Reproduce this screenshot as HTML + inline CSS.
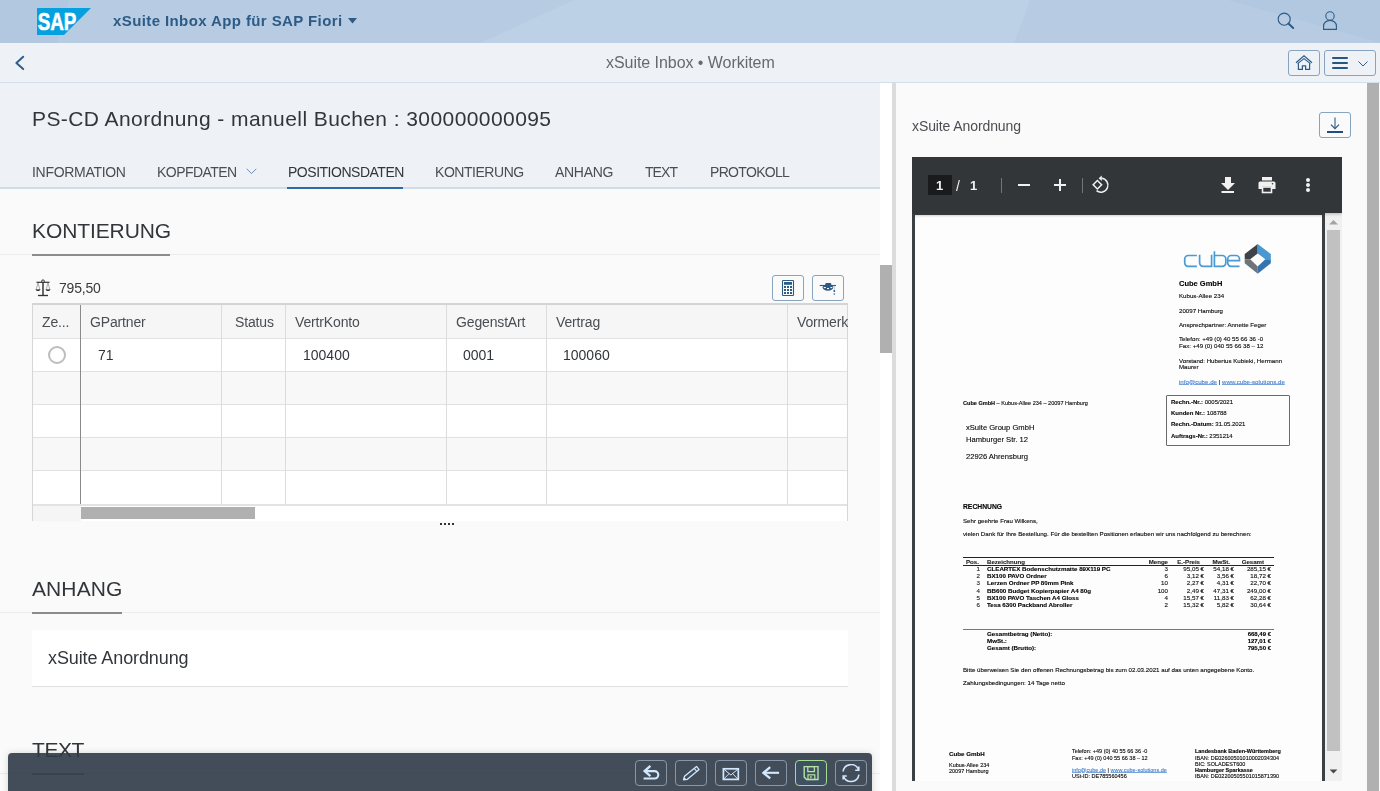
<!DOCTYPE html>
<html><head><meta charset="utf-8">
<style>
*{box-sizing:border-box;margin:0;padding:0}
html,body{width:1380px;height:791px;overflow:hidden;background:#fafafa;font-family:"Liberation Sans",sans-serif;color:#32363a}
.a{position:absolute}
.t{position:absolute;white-space:nowrap;line-height:1;will-change:transform}
#shell{left:0;top:0;width:1380px;height:43px;background:#b7cce3}
#nav{left:0;top:43px;width:1380px;height:40px;background:#eef2f7;border-bottom:1px solid #d3dfec}
#hdr{left:0;top:83px;width:880px;height:106px;background:#eef2f7}
#tabline{left:0;top:187px;width:880px;height:2px;background:#cfdcea}
.btn{position:absolute;border:1px solid #86a3bf;border-radius:3px}
.tab{font-size:14px;color:#4a4e52;letter-spacing:-0.3px;margin-top:-2.3px}
.hd{font-size:21px;color:#32363a;letter-spacing:0.1px}
.th{font-size:14px;color:#4a4e52;letter-spacing:-0.15px}
.td{font-size:14px;color:#32363a}
.vl{position:absolute;width:1px;background:#dcdcdc}
.hl{position:absolute;height:1px;background:#e1e1e1}
.p{position:absolute;white-space:nowrap;line-height:1;color:#000;font-size:5.6px;-webkit-text-stroke:0.12px currentColor;will-change:transform}
.pb{font-weight:700}
.fb{position:absolute;top:7px;width:32px;height:26px;border:1px solid #8797a8;border-radius:4px}
</style></head><body>

<!-- SHELL BAR -->
<div id="shell" class="a">
  <svg class="a" style="left:0;top:0" width="1380" height="43" viewBox="0 0 1380 43">
    <polygon points="0,0 69,0 57,43 0,43" fill="#b2c8e0"/>
    <polygon points="574,0 1030,0 1014,43 481,43" fill="#bdd1e6"/>
    <polygon points="1228,0 1380,0 1380,43" fill="#b2c8e1"/>
  </svg>
  <svg class="a" style="left:37px;top:8px" width="54" height="27" viewBox="0 0 54 27">
    <defs><linearGradient id="sg" x1="0" y1="0" x2="0" y2="1"><stop offset="0" stop-color="#00b8f1"/><stop offset="1" stop-color="#0a8fd6"/></linearGradient></defs>
    <polygon points="0,0 54,0 27,27 0,27" fill="#05a0e0"/>
    <text x="0.8" y="22" font-family="Liberation Sans" font-weight="700" font-size="23" fill="#fff" textLength="38.6" lengthAdjust="spacingAndGlyphs" stroke="#fff" stroke-width="0.6">SAP</text>
  </svg>
  <div class="t" style="left:113px;top:13px;font-size:15px;font-weight:700;color:#2d5b86;letter-spacing:0.4px">xSuite Inbox App für SAP Fiori</div>
  <svg class="a" style="left:348px;top:17px" width="10" height="7"><polygon points="0,1 9,1 4.5,6.5" fill="#2d5b86"/></svg>
  <svg class="a" style="left:1276px;top:11px" width="20" height="20" viewBox="0 0 20 20">
    <circle cx="8.2" cy="8.2" r="6" fill="none" stroke="#2d5b86" stroke-width="1.15"/>
    <line x1="12.4" y1="12.6" x2="17.2" y2="17" stroke="#2d5b86" stroke-width="2" stroke-linecap="round"/>
  </svg>
  <svg class="a" style="left:1320px;top:10px" width="20" height="22" viewBox="0 0 20 22">
    <circle cx="10" cy="6" r="4.2" fill="none" stroke="#2d5b86" stroke-width="1.1"/>
    <path d="M3.6,19.4 V16 a6.4,5.6 0 0 1 12.8,0 V19.4 Z" fill="none" stroke="#2d5b86" stroke-width="1.15"/>
  </svg>
</div>

<!-- NAV BAR -->
<div id="nav" class="a">
  <svg class="a" style="left:12px;top:10px" width="16" height="20" viewBox="0 0 16 20"><polyline points="11.2,3.7 4.4,10 11.2,16.1" fill="none" stroke="#2e5f8a" stroke-width="2" stroke-linecap="round" stroke-linejoin="round"/></svg>
  <div class="t" style="left:606px;top:12px;font-size:16px;color:#666a6e;letter-spacing:-0.05px">xSuite Inbox • Workitem</div>
  <div class="btn" style="left:1288px;top:7px;width:32px;height:26px">
    <svg class="a" style="left:6px;top:3px" width="20" height="18" viewBox="0 0 20 18">
      <polyline points="1,8.8 9,1.9 17,8.8" fill="none" stroke="#2d5b86" stroke-width="1.2"/>
      <polyline points="2.6,9.6 9,4.6 15.4,9.6" fill="none" stroke="#2d5b86" stroke-width="1.1"/>
      <path d="M3.4,9.2 V15.4 H7.4 V11.8 H10.6 V15.4 H14.6 V9.2" fill="none" stroke="#2d5b86" stroke-width="1.2"/>
    </svg>
  </div>
  <div class="btn" style="left:1324px;top:7px;width:52px;height:26px">
    <div class="a" style="left:7px;top:6.2px;width:16px;height:2px;background:#285682;border-radius:1px"></div>
    <div class="a" style="left:7px;top:11.2px;width:16px;height:2px;background:#285682;border-radius:1px"></div>
    <div class="a" style="left:7px;top:16.2px;width:16px;height:2px;background:#285682;border-radius:1px"></div>
    <svg class="a" style="left:33px;top:10px" width="10" height="6" viewBox="0 0 10 6"><polyline points="0.5,0.5 5,5 9.5,0.5" fill="none" stroke="#2d5b86" stroke-width="1"/></svg>
  </div>
</div>

<!-- LEFT HEADER -->
<div id="hdr" class="a">
  <div class="t" style="left:32px;top:25px;font-size:21px;color:#32363a;letter-spacing:0.42px">PS-CD Anordnung - manuell Buchen : 300000000095</div>
</div>
<div id="tabline" class="a"></div>
<div class="t tab" style="left:32px;top:167px">INFORMATION</div>
<div class="t tab" style="left:156.5px;top:167px;letter-spacing:-0.55px">KOPFDATEN</div>
<svg class="a" style="left:246px;top:168px" width="11" height="7" viewBox="0 0 11 7"><polyline points="0.7,0.8 5.5,5.6 10.3,0.8" fill="none" stroke="#6a8db0" stroke-width="1"/></svg>
<div class="t tab" style="left:287.5px;top:167px;color:#32363a;letter-spacing:-0.48px">POSITIONSDATEN</div>
<div class="a" style="left:287px;top:187px;width:116px;height:2px;background:#2b6ca6"></div>
<div class="t tab" style="left:434.6px;top:167px;letter-spacing:-0.46px">KONTIERUNG</div>
<div class="t tab" style="left:555px;top:167px">ANHANG</div>
<div class="t tab" style="left:644.5px;top:167px;letter-spacing:-0.95px">TEXT</div>
<div class="t tab" style="left:709.5px;top:167px;letter-spacing:-0.68px">PROTOKOLL</div>

<!-- KONTIERUNG SECTION -->
<div class="t hd" style="left:31.8px;top:219.8px;letter-spacing:-0.1px">KONTIERUNG</div>
<div class="a" style="left:0;top:254px;width:880px;height:1px;background:#ececec"></div>
<div class="a" style="left:32px;top:254px;width:138px;height:2px;background:#8c8c8c"></div>

<svg class="a" style="left:35px;top:279px" width="16" height="18" viewBox="0 0 16 18">
  <circle cx="8" cy="2.3" r="1.4" fill="none" stroke="#333" stroke-width="1"/>
  <line x1="1.5" y1="3.3" x2="14.5" y2="3.3" stroke="#333" stroke-width="1.2"/>
  <line x1="8" y1="3.5" x2="8" y2="16" stroke="#444" stroke-width="1.6"/>
  <line x1="3" y1="16.5" x2="13" y2="16.5" stroke="#333" stroke-width="1.3"/>
  <path d="M1,11 L3,4 L5,11 Z M11,11 L13,4 L15,11 Z" fill="none" stroke="#777" stroke-width="0.6"/>
  <path d="M0.5,10.5 H5.5 Q3,13.5 0.5,10.5 Z M10.5,10.5 H15.5 Q13,13.5 10.5,10.5 Z" fill="#222"/>
</svg>
<div class="t td" style="left:58.5px;top:281px;color:#3a3a3a;letter-spacing:-0.2px">795,50</div>

<div class="btn" style="left:772px;top:275px;width:32px;height:26px">
  <svg class="a" style="left:8px;top:3px" width="14" height="18" viewBox="0 0 14 18">
    <rect x="1.5" y="1.5" width="11" height="15" rx="0.6" fill="none" stroke="#2d5b86" stroke-width="1.1"/>
    <rect x="3" y="3" width="8" height="2.8" fill="#2d5b86"/>
    <g fill="#2d5b86"><rect x="3" y="7" width="2" height="2"/><rect x="6" y="7" width="2" height="2"/><rect x="9" y="7" width="2" height="2"/>
    <rect x="3" y="10" width="2" height="2"/><rect x="6" y="10" width="2" height="2"/><rect x="9" y="10" width="2" height="2"/>
    <rect x="3" y="13" width="2" height="2"/><rect x="6" y="13" width="2" height="2"/><rect x="9" y="13" width="2" height="2"/></g>
  </svg>
</div>
<div class="btn" style="left:812px;top:275px;width:32px;height:26px">
  <svg class="a" style="left:6px;top:5px" width="20" height="16" viewBox="0 0 20 16">
    <line x1="0.7" y1="4.5" x2="17" y2="4.5" stroke="#2d5b86" stroke-width="1.1"/>
    <rect x="6.3" y="1.9" width="6" height="3" rx="1" fill="#2d5b86"/>
    <ellipse cx="8.9" cy="6.5" rx="5.3" ry="3.3" fill="#2d5b86"/>
    <rect x="4.8" y="6" width="2" height="1.1" fill="#fafafa"/><rect x="8" y="7" width="2" height="1.1" fill="#fafafa"/><rect x="11.4" y="6" width="1.9" height="1.1" fill="#fafafa"/>
    <line x1="15.3" y1="4.8" x2="15.3" y2="8.8" stroke="#9fb4c8" stroke-width="0.7"/>
    <circle cx="15.3" cy="10" r="0.95" fill="#2d5b86"/><circle cx="15.3" cy="13" r="0.8" fill="#2d5b86"/>
  </svg>
</div>

<!-- TABLE -->
<div id="tbl" class="a" style="left:32px;top:303px;width:816px;height:218px;background:#fff;overflow:hidden">
  <div class="a" style="left:0;top:0;width:816px;height:35px;background:#f6f6f6"></div>
  <div class="a" style="left:0;top:0;width:816px;height:2px;background:#d4d4d4"></div>
  <div class="a" style="left:0;top:68px;width:816px;height:33px;background:#f8f8f8"></div>
  <div class="a" style="left:0;top:134px;width:816px;height:34px;background:#f8f8f8"></div>
  <div class="hl" style="left:0;top:35px;width:816px"></div>
  <div class="hl" style="left:0;top:68px;width:816px"></div>
  <div class="hl" style="left:0;top:101px;width:816px"></div>
  <div class="hl" style="left:0;top:134px;width:816px"></div>
  <div class="hl" style="left:0;top:167px;width:816px"></div>
  <div class="hl" style="left:0;top:201px;width:816px;height:2px;background:#e3e3e3"></div>
  <div class="vl" style="left:0;top:0;height:218px;background:#d6d6d6"></div>
  <div class="a" style="left:48px;top:2px;width:1px;height:199px;background:#8a8a8a"></div>
  <div class="vl" style="left:189px;top:2px;height:199px"></div>
  <div class="vl" style="left:253px;top:2px;height:199px"></div>
  <div class="vl" style="left:414px;top:2px;height:199px"></div>
  <div class="vl" style="left:514px;top:2px;height:199px"></div>
  <div class="vl" style="left:755px;top:2px;height:199px"></div>
  <div class="vl" style="left:815px;top:0;height:218px;background:#d6d6d6"></div>
  <div class="a" style="left:1px;top:203px;width:48px;height:15px;background:#f5f5f5"></div>
  <div class="a" style="left:49px;top:204px;width:174px;height:12px;background:#b0b0b0"></div>

  <div class="t th" style="left:10px;top:12.4px">Ze...</div>
  <div class="t th" style="left:58px;top:12.4px">GPartner</div>
  <div class="t th" style="left:202.5px;top:12.4px">Status</div>
  <div class="t th" style="left:263.3px;top:12.4px">VertrKonto</div>
  <div class="t th" style="left:424.3px;top:12.4px">GegenstArt</div>
  <div class="t th" style="left:524.3px;top:12.4px">Vertrag</div>
  <div class="t th" style="left:765.2px;top:12.4px">Vormerk</div>

  <div class="a" style="left:16px;top:43px;width:18px;height:18px;border:2px solid #bdbdbd;border-radius:50%;background:#fff"></div>
  <div class="t td" style="left:65.8px;top:44.8px">71</div>
  <div class="t td" style="left:270.5px;top:44.8px">100400</div>
  <div class="t td" style="left:431px;top:44.8px">0001</div>
  <div class="t td" style="left:531.3px;top:44.8px">100060</div>
</div>
<div class="a" style="left:440px;top:523px;width:2px;height:2px;background:#333"></div>
<div class="a" style="left:444px;top:523px;width:2px;height:2px;background:#333"></div>
<div class="a" style="left:448px;top:523px;width:2px;height:2px;background:#333"></div>
<div class="a" style="left:452px;top:523px;width:2px;height:2px;background:#333"></div>

<!-- ANHANG -->
<div class="t hd" style="left:31.8px;top:577.9px">ANHANG</div>
<div class="a" style="left:0;top:612px;width:880px;height:1px;background:#ececec"></div>
<div class="a" style="left:32px;top:612px;width:90px;height:2px;background:#8c8c8c"></div>
<div class="a" style="left:32px;top:630px;width:816px;height:57px;background:#fff;border-bottom:1px solid #e1e1e1"></div>
<div class="t" style="left:48px;top:649px;font-size:18px;color:#32363a;letter-spacing:-0.1px">xSuite Anordnung</div>

<!-- TEXT -->
<div class="t hd" style="left:31.8px;top:738.9px;letter-spacing:-0.45px">TEXT</div>
<div class="a" style="left:0;top:773px;width:880px;height:1px;background:#ececec"></div>
<div class="a" style="left:32px;top:773px;width:52px;height:2px;background:#8c8c8c"></div>

<!-- LEFT SCROLLBAR + DIVIDER -->
<div class="a" style="left:880px;top:83px;width:12px;height:708px;background:#fff"></div>
<div class="a" style="left:880px;top:265px;width:12px;height:88px;background:#b0b0b0"></div>
<div class="a" style="left:892px;top:83px;width:4px;height:708px;background:#dcdcdc"></div>

<!-- FOOTER -->
<div id="footer" class="a" style="left:8px;top:753px;width:864px;height:45px;background:rgba(46,58,71,0.9);border-radius:4px;box-shadow:0 0 6px rgba(0,0,0,0.15)">
  <div class="fb" style="left:627px">
    <svg class="a" style="left:6px;top:3px" width="20" height="20" viewBox="0 0 20 20">
      <path d="M2.6,7.1 H12.6 A3.7,3.7 0 0 1 12.6,14.5 H1.6" fill="none" stroke="#d1e8ff" stroke-width="2.1"/>
      <polyline points="8.4,1.9 2.6,7.1 8.4,12.2" fill="none" stroke="#d1e8ff" stroke-width="2.3"/>
    </svg>
  </div>
  <div class="fb" style="left:667px">
    <svg class="a" style="left:6px;top:3px" width="20" height="20" viewBox="0 0 20 20">
      <path d="M1.5,15.8 L2.54,12.34 L14.52,2.45 L17.08,5.55 L5.1,15.44 Z" fill="none" stroke="#d1e8ff" stroke-width="1.3" stroke-linejoin="round"/>
      <line x1="12.2" y1="4.36" x2="14.76" y2="7.46" stroke="#d1e8ff" stroke-width="1.1"/>
      <polygon points="1.5,15.8 2.2,13.3 4,14.9" fill="#d1e8ff"/>
    </svg>
  </div>
  <div class="fb" style="left:707px">
    <svg class="a" style="left:6px;top:3px" width="20" height="20" viewBox="0 0 20 20">
      <rect x="1.4" y="4.8" width="14.9" height="10.6" fill="none" stroke="#d1e8ff" stroke-width="1.7"/>
      <polyline points="1.6,5 8.85,11 16.1,5" fill="none" stroke="#d1e8ff" stroke-width="1"/>
      <line x1="1.6" y1="15.2" x2="7" y2="9.8" stroke="#d1e8ff" stroke-width="0.9"/>
      <line x1="16.1" y1="15.2" x2="10.7" y2="9.8" stroke="#d1e8ff" stroke-width="0.9"/>
    </svg>
  </div>
  <div class="fb" style="left:747px">
    <svg class="a" style="left:6px;top:3px" width="20" height="20" viewBox="0 0 20 20">
      <line x1="1.4" y1="8.8" x2="17.1" y2="8.8" stroke="#d1e8ff" stroke-width="2.1"/>
      <polyline points="8.2,3.2 1.4,8.8 8.2,14.4" fill="none" stroke="#d1e8ff" stroke-width="2.3"/>
    </svg>
  </div>
  <div class="fb" style="left:787px;border-color:#a4dc90;background:#3e5062">
    <svg class="a" style="left:6px;top:3px" width="20" height="20" viewBox="0 0 20 20">
      <path d="M2.2,2.6 H16 V15.5 H4.6 L2.2,13.1 Z" fill="none" stroke="#b3e3a0" stroke-width="1.4"/>
      <rect x="5.8" y="2.6" width="6.6" height="5" fill="none" stroke="#b3e3a0" stroke-width="1.3"/>
      <rect x="6" y="10.8" width="6.8" height="4.7" fill="none" stroke="#b3e3a0" stroke-width="1.2"/>
      <rect x="8.2" y="12" width="1.3" height="2.2" fill="#b3e3a0"/>
    </svg>
  </div>
  <div class="fb" style="left:827px">
    <svg class="a" style="left:6px;top:3px" width="20" height="20" viewBox="0 0 20 20">
      <path d="M1.1,7.5 A8,8 0 0 1 16.4,5.5" fill="none" stroke="#d1e8ff" stroke-width="1.5"/>
      <path d="M16.9,10.6 A8,8 0 0 1 1.6,12.6" fill="none" stroke="#d1e8ff" stroke-width="1.5"/>
      <polyline points="16.8,2.6 16.8,6.2 13.2,6.2" fill="none" stroke="#d1e8ff" stroke-width="1.6"/>
      <polyline points="1.2,15.6 1.2,12 4.8,12" fill="none" stroke="#d1e8ff" stroke-width="1.6"/>
    </svg>
  </div>
</div>

<!-- RIGHT PANEL -->
<div class="t" style="left:912px;top:119px;font-size:14px;color:#4a4e52;letter-spacing:-0.1px">xSuite Anordnung</div>
<div class="btn" style="left:1319px;top:112px;width:32px;height:26px">
  <svg class="a" style="left:5px;top:2px" width="20" height="20" viewBox="0 0 20 20">
    <line x1="10" y1="2.5" x2="10" y2="13.5" stroke="#2d5b86" stroke-width="1.1"/>
    <polyline points="6,9.6 10,13.6 14,9.6" fill="none" stroke="#2d5b86" stroke-width="1.3"/>
    <line x1="2" y1="17" x2="18" y2="17" stroke="#1f4e7d" stroke-width="2"/>
  </svg>
</div>

<div id="pdf" class="a" style="left:912px;top:157px;width:430px;height:624px;background:#3b4045;overflow:hidden">
  <!-- page -->
  <!--PDFSTART--><div id="pc" class="a" style="left:3px;top:58px;width:407px;height:566px;background:#fdfdfd;overflow:hidden;box-shadow:inset 0 3px 3px -2px rgba(0,0,0,0.12)">
<svg class="a" style="left:265px;top:25px" width="95" height="38" viewBox="0 0 95 38">
<g fill="none" stroke="#4a9ad4" stroke-width="1.7">
<path d="M16.9,15.5 H8.2 A3.5,3.5 0 0 0 4.7,19 V22.8 A3.5,3.5 0 0 0 8.2,26.3 H16.9"/>
<path d="M19.6,14.8 V22.8 A3.5,3.5 0 0 0 23.1,26.3 H31.6 V14.8"/>
<path d="M34.4,11.2 V26.3 H42.3 A3.5,3.5 0 0 0 45.8,22.8 V19 A3.5,3.5 0 0 0 42.3,15.5 H34.4"/>
<path d="M59.5,26.3 H51.2 A3.5,3.5 0 0 1 47.7,22.8 V19 A3.5,3.5 0 0 1 51.2,15.5 H56 A3.5,3.5 0 0 1 59.5,19 V20.6 H47.7"/>
</g>
<polygon points="77.7,4.1 77.7,13.4 70.2,19.3 64.7,19.3 64.7,14 " fill="#3d4449"/>
<polygon points="64.7,19.3 70.2,19.3 77.7,26.5 77.7,33.7 64.7,23.2" fill="#6d757b"/>
<polygon points="77.7,4.1 90.8,14 90.8,19.3 85.3,19.3 77.7,13.4" fill="#4a98d2"/>
<polygon points="90.8,19.3 90.8,23.2 77.7,33.7 77.7,26.5 85.3,19.3" fill="#3474ae"/>
</svg>
<div class="p" style="left:263.70px;top:64.65px;font-size:7.5px;font-weight:700">Cube GmbH</div>
<div class="p" style="left:263.60px;top:77.59px;font-size:6.15px;color:#0a0a0a">Kubus-Allee 234</div>
<div class="p" style="left:263.60px;top:93.09px;font-size:6.15px;color:#0a0a0a">20097 Hamburg</div>
<div class="p" style="left:263.60px;top:106.79px;font-size:6.15px;color:#0a0a0a">Ansprechpartner: Annette Feger</div>
<div class="p" style="left:263.60px;top:121.49px;font-size:6.15px;color:#0a0a0a">Telefon: +49 (0) 40 55 66 36 -0</div>
<div class="p" style="left:263.60px;top:128.29px;font-size:6.15px;color:#0a0a0a">Fax: +49 (0) 040 55 66 38 – 12</div>
<div class="p" style="left:263.60px;top:142.69px;font-size:6.15px;color:#0a0a0a">Vorstand: Hubertus Kubieki, Hermann</div>
<div class="p" style="left:263.60px;top:149.49px;font-size:6.15px;color:#0a0a0a">Maurer</div>
<div class="p" style="left:263.60px;top:163.59px;font-size:6.15px;color:#0a0a0a"><span style="color:#4a84cf;text-decoration:underline;text-decoration-color:rgba(74,132,207,0.75);text-decoration-thickness:0.5px;text-underline-offset:-0.3px">info@cube.de</span> | <span style="color:#4a84cf;text-decoration:underline;text-decoration-color:rgba(74,132,207,0.75);text-decoration-thickness:0.5px;text-underline-offset:-0.3px">www.cube-solutions.de</span></div>
<div class="p" style="left:48.00px;top:186.20px;font-size:5.55px;color:#0a0a0a"><b>Cube GmbH</b> – Kubus-Allee 234 – 20097 Hamburg</div>
<div class="a" style="left:250.70px;top:180.40px;width:124px;height:51px;border:1px solid #6a6a6a;border-radius:1px"></div>
<div class="p" style="left:256.00px;top:183.92px;font-size:6.0px;color:#0a0a0a"><b>Rechn.-Nr.:</b> 0005/2021</div>
<div class="p" style="left:256.00px;top:194.92px;font-size:6.0px;color:#0a0a0a"><b>Kunden Nr.:</b> 108788</div>
<div class="p" style="left:256.00px;top:206.12px;font-size:6.0px;color:#0a0a0a"><b>Rechn.-Datum:</b> 31.05.2021</div>
<div class="p" style="left:256.00px;top:217.62px;font-size:6.0px;color:#0a0a0a"><b>Auftrags-Nr.:</b> 2351214</div>
<div class="p" style="left:50.60px;top:208.57px;font-size:7.6px;color:#0a0a0a">xSuite Group GmbH</div>
<div class="p" style="left:50.60px;top:221.47px;font-size:7.6px;color:#0a0a0a">Hamburger Str. 12</div>
<div class="p" style="left:50.60px;top:238.47px;font-size:7.6px;color:#0a0a0a">22926 Ahrensburg</div>
<div class="p" style="left:48.00px;top:288.69px;font-size:6.75px;font-weight:700">RECHNUNG</div>
<div class="p" style="left:48.00px;top:302.54px;font-size:6.15px;color:#0a0a0a">Sehr geehrte Frau Wilkens,</div>
<div class="p" style="left:48.00px;top:315.57px;font-size:6.18px;color:#0a0a0a">vielen Dank für Ihre Bestellung. Für die bestellten Positionen erlauben wir uns nachfolgend zu berechnen:</div>
<div class="a" style="left:48.00px;top:341.50px;width:311px;height:1.3px;background:#222"></div>
<div class="a" style="left:48.00px;top:350.00px;width:311px;height:1.1px;background:#222"></div>
<div class="p" style="left:51.00px;top:343.64px;font-size:6.1px;font-weight:700;color:#222">Pos.</div>
<div class="p" style="left:72.00px;top:343.64px;font-size:6.1px;font-weight:700;color:#222">Bezeichnung</div>
<div class="p" style="left:253.00px;top:343.64px;font-size:6.1px;font-weight:700;color:#222;transform:translateX(-100%)">Menge</div>
<div class="p" style="left:284.50px;top:343.64px;font-size:6.1px;font-weight:700;color:#222;transform:translateX(-100%)">E.-Preis</div>
<div class="p" style="left:314.50px;top:343.64px;font-size:6.1px;font-weight:700;color:#222;transform:translateX(-100%)">MwSt.</div>
<div class="p" style="left:349.00px;top:343.64px;font-size:6.1px;font-weight:700;color:#222;transform:translateX(-100%)">Gesamt</div>
<div class="p" style="left:64.70px;top:351.05px;font-size:6.2px;color:#222;transform:translateX(-100%)">1</div>
<div class="p" style="left:72.00px;top:351.05px;font-size:6.2px;font-weight:700">CLEARTEX Bodenschutzmatte 89X119 PC</div>
<div class="p" style="left:253.00px;top:351.05px;font-size:6.2px;color:#111;transform:translateX(-100%)">3</div>
<div class="p" style="left:289.00px;top:351.05px;font-size:6.2px;color:#111;transform:translateX(-100%)">95,05 €</div>
<div class="p" style="left:318.50px;top:351.05px;font-size:6.2px;color:#111;transform:translateX(-100%)">54,18 €</div>
<div class="p" style="left:355.80px;top:351.05px;font-size:6.2px;color:#111;transform:translateX(-100%)">285,15 €</div>
<div class="p" style="left:64.70px;top:358.23px;font-size:6.2px;color:#222;transform:translateX(-100%)">2</div>
<div class="p" style="left:72.00px;top:358.23px;font-size:6.2px;font-weight:700">BX100 PAVO Ordner</div>
<div class="p" style="left:253.00px;top:358.23px;font-size:6.2px;color:#111;transform:translateX(-100%)">6</div>
<div class="p" style="left:289.00px;top:358.23px;font-size:6.2px;color:#111;transform:translateX(-100%)">3,12 €</div>
<div class="p" style="left:318.50px;top:358.23px;font-size:6.2px;color:#111;transform:translateX(-100%)">3,56 €</div>
<div class="p" style="left:355.80px;top:358.23px;font-size:6.2px;color:#111;transform:translateX(-100%)">18,72 €</div>
<div class="p" style="left:64.70px;top:365.41px;font-size:6.2px;color:#222;transform:translateX(-100%)">3</div>
<div class="p" style="left:72.00px;top:365.41px;font-size:6.2px;font-weight:700">Lerzen Ordner PP 80mm Pink</div>
<div class="p" style="left:253.00px;top:365.41px;font-size:6.2px;color:#111;transform:translateX(-100%)">10</div>
<div class="p" style="left:289.00px;top:365.41px;font-size:6.2px;color:#111;transform:translateX(-100%)">2,27 €</div>
<div class="p" style="left:318.50px;top:365.41px;font-size:6.2px;color:#111;transform:translateX(-100%)">4,31 €</div>
<div class="p" style="left:355.80px;top:365.41px;font-size:6.2px;color:#111;transform:translateX(-100%)">22,70 €</div>
<div class="p" style="left:64.70px;top:372.59px;font-size:6.2px;color:#222;transform:translateX(-100%)">4</div>
<div class="p" style="left:72.00px;top:372.59px;font-size:6.2px;font-weight:700">BB600 Budget Kopierpapier A4 80g</div>
<div class="p" style="left:253.00px;top:372.59px;font-size:6.2px;color:#111;transform:translateX(-100%)">100</div>
<div class="p" style="left:289.00px;top:372.59px;font-size:6.2px;color:#111;transform:translateX(-100%)">2,49 €</div>
<div class="p" style="left:318.50px;top:372.59px;font-size:6.2px;color:#111;transform:translateX(-100%)">47,31 €</div>
<div class="p" style="left:355.80px;top:372.59px;font-size:6.2px;color:#111;transform:translateX(-100%)">249,00 €</div>
<div class="p" style="left:64.70px;top:379.77px;font-size:6.2px;color:#222;transform:translateX(-100%)">5</div>
<div class="p" style="left:72.00px;top:379.77px;font-size:6.2px;font-weight:700">BX100 PAVO Taschen A4 Gloss</div>
<div class="p" style="left:253.00px;top:379.77px;font-size:6.2px;color:#111;transform:translateX(-100%)">4</div>
<div class="p" style="left:289.00px;top:379.77px;font-size:6.2px;color:#111;transform:translateX(-100%)">15,57 €</div>
<div class="p" style="left:318.50px;top:379.77px;font-size:6.2px;color:#111;transform:translateX(-100%)">11,83 €</div>
<div class="p" style="left:355.80px;top:379.77px;font-size:6.2px;color:#111;transform:translateX(-100%)">62,28 €</div>
<div class="p" style="left:64.70px;top:386.95px;font-size:6.2px;color:#222;transform:translateX(-100%)">6</div>
<div class="p" style="left:72.00px;top:386.95px;font-size:6.2px;font-weight:700">Tesa 6300 Packband Abroller</div>
<div class="p" style="left:253.00px;top:386.95px;font-size:6.2px;color:#111;transform:translateX(-100%)">2</div>
<div class="p" style="left:289.00px;top:386.95px;font-size:6.2px;color:#111;transform:translateX(-100%)">15,32 €</div>
<div class="p" style="left:318.50px;top:386.95px;font-size:6.2px;color:#111;transform:translateX(-100%)">5,82 €</div>
<div class="p" style="left:355.80px;top:386.95px;font-size:6.2px;color:#111;transform:translateX(-100%)">30,64 €</div>
<div class="a" style="left:48.00px;top:413.70px;width:311px;height:0.8px;background:#777"></div>
<div class="p" style="left:72.00px;top:415.75px;font-size:6.2px;font-weight:700">Gesamtbetrag (Netto):</div>
<div class="p" style="left:355.80px;top:415.92px;font-size:6.0px;font-weight:700;transform:translateX(-100%)">668,49 €</div>
<div class="p" style="left:72.00px;top:422.85px;font-size:6.2px;font-weight:700">MwSt.:</div>
<div class="p" style="left:355.80px;top:423.02px;font-size:6.0px;font-weight:700;transform:translateX(-100%)">127,01 €</div>
<div class="p" style="left:72.00px;top:430.15px;font-size:6.2px;font-weight:700">Gesamt (Brutto):</div>
<div class="p" style="left:355.80px;top:430.32px;font-size:6.0px;font-weight:700;transform:translateX(-100%)">795,50 €</div>
<div class="p" style="left:48.00px;top:452.37px;font-size:6.18px;color:#0a0a0a">Bitte überweisen Sie den offenen Rechnungsbetrag bis zum 02.03.2021 auf das unten angegebene Konto.</div>
<div class="p" style="left:48.00px;top:465.47px;font-size:6.18px;color:#0a0a0a">Zahlungsbedingungen: 14 Tage netto</div>
<div class="p" style="left:33.60px;top:535.85px;font-size:6.2px;font-weight:700">Cube GmbH</div>
<div class="p" style="left:33.60px;top:547.54px;font-size:5.5px;color:#0a0a0a">Kubus-Allee 234</div>
<div class="p" style="left:33.60px;top:554.14px;font-size:5.5px;color:#0a0a0a">20097 Hamburg</div>
<div class="p" style="left:157.00px;top:533.64px;font-size:5.5px;color:#0a0a0a">Telefon: +49 (0) 40 55 66 36 -0</div>
<div class="p" style="left:157.00px;top:540.54px;font-size:5.5px;color:#0a0a0a">Fax: +49 (0) 040 55 66 38 – 12</div>
<div class="p" style="left:157.00px;top:553.14px;font-size:5.5px;color:#0a0a0a"><span style="color:#4a84cf;text-decoration:underline;text-decoration-color:rgba(74,132,207,0.75);text-decoration-thickness:0.5px;text-underline-offset:-0.3px">info@cube.de</span> | <span style="color:#4a84cf;text-decoration:underline;text-decoration-color:rgba(74,132,207,0.75);text-decoration-thickness:0.5px;text-underline-offset:-0.3px">www.cube-solutions.de</span></div>
<div class="p" style="left:157.00px;top:559.34px;font-size:5.5px;color:#0a0a0a">USt-ID: DE785560456</div>
<div class="p" style="left:280.20px;top:534.28px;font-size:5.46px;font-weight:700">Landesbank Baden-Württemberg</div>
<div class="p" style="left:280.20px;top:540.68px;font-size:5.46px;color:#0a0a0a">IBAN: DE02600501010002034304</div>
<div class="p" style="left:280.20px;top:546.78px;font-size:5.46px;color:#0a0a0a">BIC: SOLADEST600</div>
<div class="p" style="left:280.20px;top:552.98px;font-size:5.46px;font-weight:700">Hamburger Sparkasse</div>
<div class="p" style="left:280.20px;top:559.48px;font-size:5.46px;color:#0a0a0a">IBAN: DE02200505501015871390</div>
<div class="p" style="left:280.20px;top:566.18px;font-size:5.46px;color:#0a0a0a">BIC: HASPDEHHXXX</div>
</div><!--PDFEND-->
  <!-- scroll trough -->
  <div class="a" style="left:413px;top:56px;width:17px;height:568px;background:#f0f0f0"></div>
  <div class="a" style="left:415px;top:73px;width:13px;height:521px;background:#c1c1c1"></div>
  <svg class="a" style="left:416px;top:61px" width="11" height="8"><polygon points="1,6.5 10,6.5 5.5,2" fill="#a3a3a3"/></svg>
  <svg class="a" style="left:416px;top:611px" width="11" height="8"><polygon points="1.6,1.6 9.4,1.6 5.5,5.5" fill="#4a4a4a"/></svg>
  <!-- toolbar -->
  <div class="a" style="left:0;top:0;width:430px;height:56px;background:#323639;box-shadow:0 1px 3px rgba(0,0,0,0.25)">
    <div class="a" style="left:16px;top:18px;width:24px;height:20px;background:#191b1c"></div>
    <div class="t" style="left:24px;top:22px;font-size:13px;font-weight:700;color:#f1f1f1">1</div>
    <div class="t" style="left:44px;top:22px;font-size:14px;color:#f1f1f1">/</div>
    <div class="t" style="left:57.5px;top:22px;font-size:13px;font-weight:700;color:#f1f1f1">1</div>
    <div class="a" style="left:89px;top:21px;width:1px;height:15px;background:#70757a"></div>
    <div class="a" style="left:106px;top:27px;width:12px;height:2px;background:#f1f1f1"></div>
    <div class="a" style="left:142px;top:27px;width:12px;height:2px;background:#f1f1f1"></div>
    <div class="a" style="left:147px;top:22px;width:2px;height:12px;background:#f1f1f1"></div>
    <div class="a" style="left:170px;top:21px;width:1px;height:15px;background:#70757a"></div>
    <svg class="a" style="left:179px;top:18px" width="20" height="20" viewBox="0 0 20 20">
      <path d="M10.5,3.2 A7,7 0 1 1 5.5,15.6" fill="none" stroke="#f1f1f1" stroke-width="1.5"/>
      <polygon points="10.8,0.5 10.8,6 7.6,3.2" fill="#f1f1f1"/>
      <rect x="3.4" y="6.8" width="6" height="6" transform="rotate(45 6.4 9.8)" fill="none" stroke="#f1f1f1" stroke-width="1.5"/>
    </svg>
    <svg class="a" style="left:308px;top:19px" width="16" height="18" viewBox="0 0 16 18">
      <polygon points="5,1 11,1 11,7 15,7 8,14 1,7 5,7" fill="#f1f1f1"/>
      <rect x="1.5" y="15" width="12.5" height="2" fill="#f1f1f1"/>
    </svg>
    <svg class="a" style="left:346px;top:19px" width="18" height="18" viewBox="0 0 18 18">
      <rect x="4" y="1" width="10" height="3.5" fill="#f1f1f1"/>
      <path d="M2,5.5 H16 A1.5,1.5 0 0 1 17.5,7 V13 H14 V10.5 H4 V13 H0.5 V7 A1.5,1.5 0 0 1 2,5.5 Z" fill="#f1f1f1"/>
      <rect x="4.5" y="11" width="9" height="5.5" fill="none" stroke="#f1f1f1" stroke-width="1.6"/>
      <circle cx="14.5" cy="7.8" r="0.8" fill="#323639"/>
    </svg>
    <div class="a" style="left:394px;top:20.8px;width:4px;height:4px;border-radius:50%;background:#f1f1f1"></div>
    <div class="a" style="left:394px;top:26px;width:4px;height:4px;border-radius:50%;background:#f1f1f1"></div>
    <div class="a" style="left:394px;top:31.2px;width:4px;height:4px;border-radius:50%;background:#f1f1f1"></div>
  </div>
</div>

<!-- RIGHT SCROLLBAR -->
<div class="a" style="left:1367px;top:83px;width:12px;height:708px;background:#b0b0b0"></div>

</body></html>
